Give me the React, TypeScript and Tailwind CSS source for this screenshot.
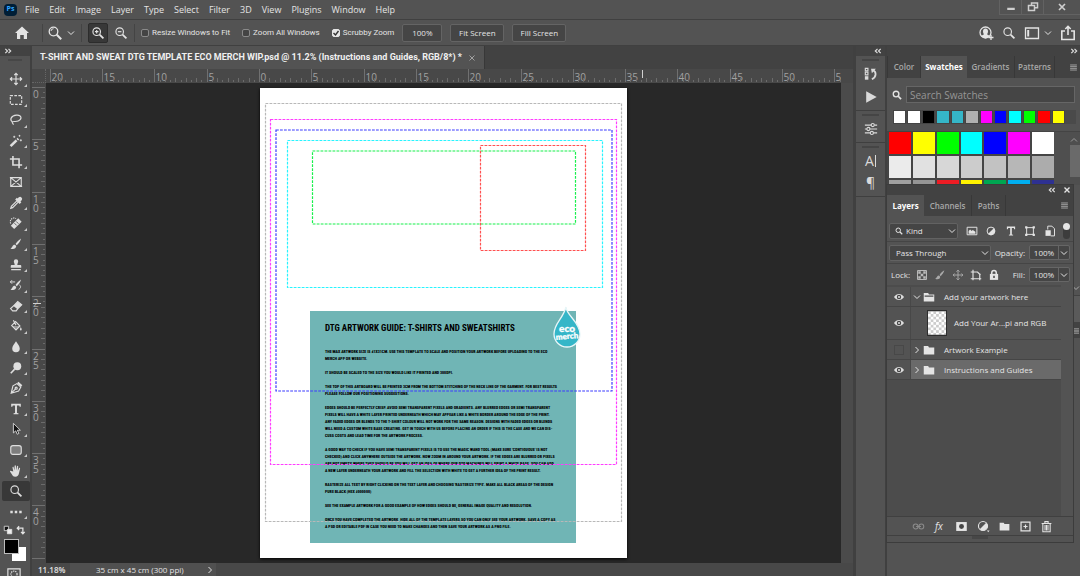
import type { ReactNode } from "react";
import { clsx } from "clsx";

const MENUS = ["File", "Edit", "Image", "Layer", "Type", "Select", "Filter", "3D", "View", "Plugins", "Window", "Help"];

const RECENT = [
  "#ffffff", "#ffffff", "#000000", "#35b6c8", "#35b6c8", "#b0b0b0",
  "#ff00ff", "#0000ff", "#00ffff", "#00ff00", "#ff0000", "#ffff00",
];

const SWATCHES = [
  "#ff0000", "#ffff00", "#00ff00", "#00ffff", "#0000ff", "#ff00ff", "#ffffff",
  "#ebebeb", "#e1e1e1", "#d7d7d7", "#cccccc", "#c2c2c2", "#b7b7b7", "#acacac",
  "#a0a0a0", "#959595", "#ed1c24", "#fff200", "#00a651", "#00aeef", "#2e3192",
];

const GUIDE_TEXT = [
  ["The max artwork size is 41x31cm. Use this template to scale and position your artwork before uploading to the Eco", "Merch app or website."],
  ["It should be scaled to the size you would like it printed and 300dpi."],
  ["The top of this artboard will be printed 3cm from the bottom stitching of the neck line of the garment. For best results", "please follow our positioning suggestions."],
  [
    "Edges should be perfectly crisp. Avoid semi transparent pixels and gradients. Any blurred edges or semi transparent",
    "pixels will have a white layer printed underneath which may appear like a white border around the edge of the print.",
    "Any faded edges or blends to the t-shirt colour will not work for the same reason. Designs with faded edges or blends",
    "will need a custom white base creating. Get in touch with us before placing an order if this is the case and we can dis-",
    "cuss costs and lead time for the artwork process.",
  ],
  [
    "A good way to check if you have semi transparent pixels is to use the magic wand tool (make sure 'contiguous' is not",
    "checked) and click anywhere outside the artwork.  Now zoom in around your artwork. If the edges are blurred or pixels",
    "are not empty where they should be you will get an idea of where our DTG machines will print a white base. You can add",
    "a new layer underneath your artwork and fill the selection with white to get a further idea of the print result.",
  ],
  ["Rasterize all text by right clicking on the text layer and choosing 'Rasterize Type'. Make all black areas of the design", "pure black (Hex #000000)"],
  ["See the example artwork for a good example of how edges should be, general image quality and resolution."],
  ["Once you have completed the artwork, hide all of the template layers so you can only see your artwork. Save a copy as", "a PSD or editable PDF in case you need to make changes and then save your artwork as a PNG file."],
];

const GUIDES = [
  { x: 5.5, y: 15.5, w: 356, h: 418, color: "#b8b8b8" },
  { x: 10.5, y: 31.5, w: 346, h: 345, color: "#ff3cff" },
  { x: 16, y: 42, w: 336, h: 261, color: "#3c3cff" },
  { x: 27.5, y: 52.5, w: 315, h: 147, color: "#28f4ff" },
  { x: 52.5, y: 63, w: 263, h: 73, color: "#18f04c" },
  { x: 220.5, y: 57.5, w: 105, h: 105, color: "#ff5050" },
];

function Icon({ children, className = "size-4" }: { children: ReactNode; className?: string }) {
  return (
    <svg viewBox="0 0 16 16" fill="none" stroke="currentColor" strokeWidth="1.3" className={clsx("shrink-0", className)} aria-hidden="true">
      {children}
    </svg>
  );
}

function Chevron({ className = "w-2 h-2" }: { className?: string }) {
  return (
    <svg viewBox="0 0 8 8" fill="none" stroke="currentColor" className={clsx("shrink-0", className)} aria-hidden="true">
      <path d="M1 2.5l3 3 3-3" />
    </svg>
  );
}

function DoubleChevron({ left = false }: { left?: boolean }) {
  return (
    <svg viewBox="0 0 8 8" fill="none" stroke="#dcdcdc" strokeWidth="1.2" className="size-2" aria-hidden="true">
      {left ? <path d="M3.5 1.8L1.3 4l2.2 2.2M6.7 1.8L4.5 4l2.2 2.2" /> : <path d="M1.3 1.8L3.5 4 1.3 6.2M4.5 1.8L6.7 4 4.5 6.2" />}
    </svg>
  );
}

const lens = (
  <>
    <circle cx="6.5" cy="6.5" r="4.3" />
    <path d="M9.8 9.8l4.4 4.4" strokeWidth="2" />
  </>
);

const folder = <path d="M2 3.5h5l1 1.5h6v8H2z" fill="currentColor" stroke="none" />;

const brush = (
  <>
    <path d="M13.8 1.8c-2.6 1.6-4.8 3.8-6.4 6.2l1.5 1.5c2.3-2 4-4.5 4.9-7.7z" fill="currentColor" stroke="none" />
    <path d="M6.7 8.8c-2.8-.2-2.4 2.9-5 4.2 2.5 1.4 6.4.9 6.6-2.6z" fill="currentColor" stroke="none" />
  </>
);

const halfCircle = (
  <>
    <circle cx="8" cy="8" r="5.2" />
    <path d="M11.7 4.3a5.2 5.2 0 0 1-7.4 7.4z" fill="currentColor" stroke="none" />
  </>
);

const move = (
  <path d="M8 1.5v13M1.5 8h13M6 3.5l2-2 2 2M6 12.5l2 2 2-2M3.5 6l-2 2 2 2M12.5 6l2 2-2 2" />
);

const TOOLS: { name: string; icon: ReactNode; corner?: boolean }[] = [
  { name: "Move", corner: true, icon: move },
  { name: "Marquee", corner: true, icon: <path d="M1.5 3h13v10h-13z" strokeDasharray="3 1.6" /> },
  {
    name: "Lasso", corner: true,
    icon: <path d="M4 10.500C.2 7.500 2.500 3 8.500 2.500s7 4.500 2 6.700C8 10.300 4.500 9 3.800 10.300s1.600 1.800 1 3.200" />,
  },
  {
    name: "Magic Wand", corner: true,
    icon: (
      <>
        <path d="M1.8 13.8l6.800-6.500" strokeWidth="3" />
        <path d="M9.500 6.500l1.200-1.200" strokeWidth="2.600" />
        <path d="M6 2v2.500M4.800 3.200h2.400M12 1v2M11 2h2M13.500 6v2.400M12.300 7.200h2.400" strokeWidth="1" />
      </>
    ),
  },
  { name: "Crop", corner: true, icon: <path d="M4.500 1v10.500H15M1 4.500h10.500V15" strokeWidth="1.800" /> },
  { name: "Frame", icon: <path d="M2 3h12v10H2zM2 3l12 10M14 3L2 13M1 3h2M13 13h2" /> },
  {
    name: "Eyedropper", corner: true,
    icon: (
      <>
        <path d="M9 5.500l-6.300 6.300-.7 2.200 2.200-.7L10.500 7" />
        <path d="M8 4l4.200 4.200 1-1-1-1 1.800-1.800c1.200-1.700-.9-3.700-2.400-2.400L9.800 3.800 9 3z" fill="currentColor" />
      </>
    ),
  },
  {
    name: "Healing Brush", corner: true,
    icon: (
      <>
        <path d="M2 8.500a4.200 4.200 0 0 1 6-5.500" strokeDasharray="1.500 1" />
        <path d="M4 13l8.500-8.500" strokeWidth="5.500" />
        <path d="M6.200 8.200l2.600 2.600M8.200 6.200l2.600 2.600" stroke="#535353" strokeWidth="1" />
      </>
    ),
  },
  { name: "Brush", corner: true, icon: brush },
  {
    name: "Clone Stamp", corner: true,
    icon: <path d="M5.500 4a2.500 2.500 0 0 1 5 0c0 1.500-1 2-1 4H13q1 0 1 1v2H2V9q0-1 1-1h3.500c0-2-1-2.500-1-4zM2.500 12.500h11v1.500h-11z" fill="currentColor" stroke="none" />,
  },
  {
    name: "History Brush", corner: true,
    icon: (
      <>
        {brush}
        <path d="M1.500 4.500h5.500M1.500 4.500l2-2M1.500 4.500l2 2M12 8c2 1 1.500 4-1 5" strokeWidth="1.100" />
      </>
    ),
  },
  {
    name: "Eraser", corner: true,
    icon: (
      <>
        <path d="M5.500 7.500L10 3l4.500 3.500L10 11z" fill="currentColor" />
        <path d="M5.500 7.500L1.800 11l2.400 2.500h4L10 11" />
      </>
    ),
  },
  {
    name: "Paint Bucket", corner: true,
    icon: (
      <>
        <path d="M3 7.500L7.500 3l5 5L8 12.500zM8 7L5 1.500" />
        <path d="M3.500 8h8.800L8 12.300z" fill="currentColor" stroke="none" opacity="0.5" />
        <path d="M13.500 9c1.500 2.500 1.200 4 0 4s-1.500-1.500 0-4z" fill="currentColor" stroke="none" />
      </>
    ),
  },
  { name: "Blur", corner: true, icon: <path d="M8 1.500c2 3.500 4.300 5.500 4.300 8.300a4.300 4.300 0 0 1-8.600 0C3.700 7 6 5 8 1.500z" fill="currentColor" stroke="none" /> },
  {
    name: "Dodge", corner: true,
    icon: (
      <>
        <circle cx="9.500" cy="6" r="4.500" fill="currentColor" stroke="none" />
        <path d="M6.500 9.300L2 14" strokeWidth="1.800" />
      </>
    ),
  },
  {
    name: "Pen", corner: true,
    icon: (
      <>
        <path d="M9 3l4.500 4-2.500 4.500-8.500 2.500 2-8.500zM3 13.500l4.500-4.500" />
        <circle cx="8.200" cy="8.200" r="1.200" />
        <path d="M10 1.800l4.500 4" strokeWidth="2.200" />
      </>
    ),
  },
  { name: "Type", corner: true, icon: <path d="M2.500 2h11v3.500h-1.300L11.700 4H9.100v8.500l1.700.4V14H5.200v-1.100l1.700-.4V4H4.300l-.5 1.500H2.500z" fill="currentColor" stroke="none" /> },
  { name: "Path Selection", corner: true, icon: <path d="M5 1.500v11l2.700-2.400 1.700 3.900 1.900-.9-1.800-3.700H13z" fill="#111" strokeWidth="1" /> },
  { name: "Rectangle", corner: true, icon: <rect x="2" y="3" width="12" height="10" rx="2.500" fill="#7d7d7d" /> },
  {
    name: "Hand", corner: true,
    icon: <path d="M4.900 8.500L4 4.200c-.2-1 1-1.300 1.300-.4l1 3.500.1-5c0-1 1.400-1 1.500 0l.3 4.900.9-4.700c.2-1 1.500-.7 1.400.2l-.4 5 1.300-2.900c.4-.9 1.500-.5 1.300.4l-1.300 5.300c-.5 2.300-1.700 4-4.200 4-2.400 0-3.200-1.200-4.200-3L1.300 8.800c-.5-.9.5-1.500 1.200-.9z" fill="currentColor" stroke="none" />,
  },
  { name: "Zoom", icon: lens },
  {
    name: "Edit Toolbar", corner: true,
    icon: <path d="M1.500 8h2.800M6.600 8h2.800M11.700 8h2.800" strokeWidth="2.800" />,
  },
];

function MenuBar() {
  return (
    <header className="flex h-5 shrink-0 items-center border-b border-[#404040] bg-[#535353]">
      <div className="ml-1 flex h-3 w-[13px] items-center justify-center rounded-sm bg-[#001e36] text-[7px] font-bold text-[#31a8ff]">Ps</div>
      <nav className="ml-2 flex items-center gap-[10px] text-[9px]">
        {MENUS.map((menu) => (
          <button key={menu} type="button">{menu}</button>
        ))}
      </nav>
      <div className="ml-auto flex h-[15px] self-start border-b border-l border-[#626262] text-[#cfcfcf]">
        <button type="button" aria-label="Minimize" className="flex w-[22px] items-center justify-center border-r border-[#626262]">
          <Icon className="size-3"><path d="M3 10.500h10" strokeWidth="3" /></Icon>
        </button>
        <button type="button" aria-label="Restore" className="flex w-[22px] items-center justify-center border-r border-[#626262]">
          <Icon className="size-3"><path d="M6 6V2.500h8V9h-4M2 6h8v6.500H2z" strokeWidth="2" /></Icon>
        </button>
        <button type="button" aria-label="Close" className="flex w-9 items-center justify-center">
          <Icon className="size-3"><path d="M4 4l8 8M12 4l-8 8" strokeWidth="2.200" /></Icon>
        </button>
      </div>
    </header>
  );
}

function Option({ label, checked = false }: { label: string; checked?: boolean }) {
  return (
    <label className="flex items-center gap-[3px]">
      <span className="relative flex size-2">
        <input
          type="checkbox"
          defaultChecked={checked}
          className="peer size-2 appearance-none rounded-[2px] border border-[#8a8a8a] bg-[#444] checked:border-[#e6e6e6] checked:bg-[#e6e6e6]"
        />
        <svg viewBox="0 0 8 8" fill="none" stroke="#333" strokeWidth="1.400" className="pointer-events-none absolute inset-0 hidden size-2 peer-checked:block">
          <path d="M1.500 4l2 2 3-4" />
        </svg>
      </span>
      {label}
    </label>
  );
}

function OptionsBar() {
  return (
    <div className="flex h-[26px] shrink-0 items-center border-b border-[#404040] bg-[#535353] text-[8px]">
      <button type="button" aria-label="Home" className="ml-[14px]">
        <Icon><path d="M8 1.500l7 6.500h-2v6H9.800v-4H6.200v4H3V8H1z" fill="currentColor" stroke="none" /></Icon>
      </button>
      <div className="mr-1 ml-3 h-[18px] w-px bg-[#444]" />
      <Icon>{lens}<path d="M4 6a2.500 2.500 0 0 1 2.500-2.300" strokeWidth="1" /></Icon>
      <Chevron className="ml-1 size-2" />
      <div className="mx-[6px] h-[18px] w-px bg-[#444]" />
      <button type="button" aria-label="Zoom in" className="flex size-5 items-center justify-center rounded-[2px] border border-[#2c2c2c] bg-[#383838]">
        <Icon className="size-[14px]">{lens}<path d="M4.500 6.500h4M6.500 4.500v4" /></Icon>
      </button>
      <button type="button" aria-label="Zoom out" className="ml-[6px]">
        <Icon className="size-[14px]">{lens}<path d="M4.500 6.500h4" /></Icon>
      </button>
      <div className="mx-[6px] h-[18px] w-px bg-[#444]" />
      <div className="flex items-center gap-3 font-['Roboto',sans-serif]">
        <Option label="Resize Windows to Fit" />
        <Option label="Zoom All Windows" />
        <Option label="Scrubby Zoom" checked />
      </div>
      <div className="ml-2 flex gap-2">
        <button type="button" className="h-[18px] w-10 rounded-[2px] border border-[#646464] bg-[#454545]">100%</button>
        <button type="button" className="h-[18px] w-[54px] rounded-[2px] border border-[#646464] bg-[#454545]">Fit Screen</button>
        <button type="button" className="h-[18px] w-[54px] rounded-[2px] border border-[#646464] bg-[#454545]">Fill Screen</button>
      </div>
      <div className="mr-1 ml-auto flex items-center gap-2">
        <Icon>
          <circle cx="7.500" cy="7.500" r="5.500" />
          <path d="M5 6.500a2.500 3 0 0 1 5 0c0 1.500-.8 2-.8 3 1 .6 2 .8 2.800 1.500a5.500 5.500 0 0 1-9 0c.8-.7 1.800-.9 2.800-1.500 0-1-.8-1.500-.8-3z" fill="currentColor" stroke="none" />
          <path d="M13 10v5M10.500 12.500h5" />
        </Icon>
        <Icon className="size-[14px]">{lens}</Icon>
        <Icon><path d="M1.500 3h13v10.500h-13z" /><path d="M3.200 5h2v6.500h-2z" fill="currentColor" stroke="none" /></Icon>
        <Chevron className="-ml-1 size-2" />
        <Icon><path d="M5 6H1.800v8.500h12.400V6H11M8 10V1.500M5.300 4L8 1.300 10.700 4" strokeWidth="1.600" /></Icon>
      </div>
    </div>
  );
}

function Toolbar() {
  return (
    <aside className="flex w-8 shrink-0 flex-col border-r-2 border-[#404040] bg-[#535353]">
      <div className="flex h-[10px] items-center bg-[#424242] pl-1"><DoubleChevron /></div>
      <div className="mx-2 mt-[3px] mb-2 h-[2px] bg-[#474747]" />
      <div className="flex h-[453px] flex-col pl-[2px]">
        {TOOLS.map((tool) => (
          <button
            key={tool.name}
            type="button"
            aria-label={tool.name}
            className={clsx(
              "relative flex w-7 flex-1 items-center justify-center rounded-[2px] text-[#dedede]",
              tool.name === "Zoom" && "bg-[#383838]",
            )}
          >
            <Icon className="size-[14px]">{tool.icon}</Icon>
            {tool.corner && (
              <svg viewBox="0 0 3 3" className="absolute right-[3px] bottom-[3px] size-[3px] fill-[#c8c8c8]">
                <path d="M3 0v3H0z" />
              </svg>
            )}
          </button>
        ))}
      </div>
      <div className="flex h-4 items-center justify-between pr-1 pl-[3px]">
        <Icon className="size-[10px]"><path d="M2 2h7v7H2z" fill="#111" /><path d="M7 7h7v7H7z" fill="#eee" /></Icon>
        <Icon className="size-[10px]"><path d="M5 2L2 5l3 3M2 5h9v9M8 11l3 3 3-3" strokeWidth="2" /></Icon>
      </div>
      <div className="relative ml-1 h-6 shrink-0">
        <div className="absolute top-[9px] left-2 size-[14px] bg-white" />
        <div className="absolute top-[1px] left-0 size-[15px] border border-[#bdbdbd] bg-black" />
      </div>
      <div className="mt-[6px] ml-[7px] h-2 w-[14px] overflow-hidden">
        <Icon className="size-[14px]"><path d="M1 1h14v12H1z" /><circle cx="8" cy="7" r="3.500" strokeDasharray="1.500 1" /></Icon>
      </div>
    </aside>
  );
}

const UNIT = 10.46;

function HorizontalRuler() {
  const ticks = Array.from({ length: 156 }, (_, i) => i - 42);
  return (
    <div className="flex h-[14px] shrink-0 overflow-hidden bg-[#484848]">
      <div className="w-[14px] border-r border-b border-dotted border-[#666]" />
      <svg className="h-[14px] w-0 flex-1" aria-hidden="true">
        {ticks.map((t) => {
          const x = Math.round(214 + (t * UNIT) / 2) - 0.5;
          const major = t % 10 === 0;
          return (
            <g key={t}>
              <path d={`M${x} ${major ? 0 : t % 2 === 0 ? 9 : 11}V13`} stroke={major ? "#707070" : "#6b6b6b"} />
              {major && <text x={x + 1} y="12" fontSize="10" fill="#a2a2a2">{Math.abs(t / 2)}</text>}
            </g>
          );
        })}
        <path d="M596.500 1v8" stroke="#d0d0d0" />
      </svg>
      <div className="w-3" />
    </div>
  );
}

function VerticalRuler() {
  const ticks = Array.from({ length: 92 }, (_, i) => i);
  return (
    <svg className="h-full w-[14px] shrink-0 bg-[#484848]" aria-hidden="true">
      {ticks.map((t) => {
        const y = Math.round(5 + (t * UNIT) / 2) - 0.5;
        const major = t % 10 === 0;
        return (
          <g key={t}>
            <path d={`M${major ? 0 : t % 2 === 0 ? 9 : 11} ${y}H13`} stroke={major ? "#707070" : "#6b6b6b"} />
            {major && t < 90 && (
              <text y={y + 10} fontSize="10" fill="#a2a2a2">
                {String(t / 2).split("").map((digit, i) => (
                  <tspan key={i} x="1" dy={i * 9}>{digit}</tspan>
                ))}
              </text>
            )}
          </g>
        );
      })}
      <path d="M1 220.500h8" stroke="#d0d0d0" />
    </svg>
  );
}

function Artboard() {
  return (
    <div className="relative h-[470px] w-[367px] shrink-0 bg-white shadow-[0_1px_3px_#000]">
      <article className="absolute top-[223px] left-[50px] h-[232px] w-[266px] bg-[#70b5b5] pt-[11px] pl-[15px] font-['Roboto_Condensed','Roboto',sans-serif] font-bold whitespace-nowrap text-black uppercase">
        <h1 className="text-[9px] leading-3">DTG Artwork Guide: T-shirts and Sweatshirts</h1>
        <div className="mt-[14px] flex flex-col gap-[7px] text-[4px] leading-[7px] font-black">
          {GUIDE_TEXT.map((lines) => (
            <p key={lines[0]}>
              {lines.map((line) => (
                <span key={line} className="block">{line}</span>
              ))}
            </p>
          ))}
        </div>
      </article>
      <svg viewBox="0 0 367 470" className="absolute inset-0 size-full" fill="none" aria-hidden="true">
        {GUIDES.map((g) => (
          <rect key={g.color} x={g.x} y={g.y} width={g.w} height={g.h} stroke={g.color} strokeWidth="1.200" strokeDasharray="2.800 1.200" />
        ))}
      </svg>
      <svg viewBox="0 0 28 42" className="absolute top-[218px] left-[293px] h-[42px] w-7">
        <path d="M13 1c0 8 14 15 14 27a13 13 0 0 1-26 0C1 17 10 13 13 1z" fill="#35b6c8" stroke="#e8f6f8" strokeWidth="1.300" />
        <g fill="#fff" stroke="#fff" strokeWidth="0.300" fontWeight="900" textAnchor="middle" fontFamily="Lato, sans-serif">
          <text x="14" y="26" fontSize="10">eco</text>
          <text x="14" y="33" fontSize="8" transform="rotate(-5 14 30)">merch</text>
        </g>
      </svg>
    </div>
  );
}

function Document() {
  return (
    <main className="flex min-w-0 flex-1 flex-col bg-[#424242]">
      <div className="flex h-[23px] shrink-0">
        <div className="flex items-center gap-[6px] border-r border-[#383838] bg-[#535353] px-2 font-['Roboto',sans-serif] text-[9px] font-bold whitespace-nowrap text-[#f0f0f0]">
          T-SHIRT AND SWEAT DTG TEMPLATE ECO MERCH WIP.psd @ 11.2% (Instructions and Guides, RGB/8*) *
          <button type="button" aria-label="Close tab" className="text-[#b5b5b5]">
            <Icon className="size-2"><path d="M3 3l10 10M13 3L3 13" strokeWidth="1.600" /></Icon>
          </button>
        </div>
      </div>
      <HorizontalRuler />
      <div className="flex min-h-0 flex-1">
        <VerticalRuler />
        <div className="flex min-w-0 flex-1 items-center justify-center overflow-hidden bg-[#282828]">
          <Artboard />
        </div>
        <div className="w-3 bg-[#4b4b4b]" />
      </div>
      <footer className="flex h-[13px] shrink-0 items-center bg-[#484848] text-[8px]">
        <span className="w-[38px] pl-[6px] font-semibold">11.18%</span>
        <div className="flex h-full w-[146px] items-center justify-between bg-[#505050] pr-[2px] pl-[26px]">
          35 cm x 45 cm (300 ppi)
          <Chevron className="size-2 -rotate-90" />
        </div>
      </footer>
    </main>
  );
}

function Grip() {
  return <div className="mx-[6px] mt-[3px] h-[2px] bg-[#454545]" />;
}

function Dock() {
  return (
    <aside className="flex w-[34px] shrink-0 flex-col border-r-2 border-l-[3px] border-[#404040] bg-[#535353] text-[#dadada]">
      <div className="flex h-[10px] items-center justify-end bg-[#424242] pr-[3px]"><DoubleChevron left /></div>
      <div className="flex h-[55px] flex-col items-center border-b border-[#3f3f3f]">
        <div className="w-full"><Grip /></div>
        <Icon className="mt-[6px] size-[14px]">
          <path d="M1.500 1.500h3v3h-3zM1.500 6h3v3h-3z" />
          <path d="M1 10.500h4v4H1z" fill="currentColor" stroke="none" />
          <path d="M10 3.500c4.500 2 4.500 7.500-1 10.500" strokeWidth="2" />
          <path d="M8 2h5.500L9 7z" fill="currentColor" stroke="none" />
        </Icon>
        <Icon className="mt-[9px] size-[14px]"><path d="M2.500 1.500l12 6.500-12 6.500z" fill="currentColor" stroke="none" /></Icon>
      </div>
      <div className="flex h-8 flex-col items-center border-b border-[#3f3f3f]">
        <div className="w-full"><Grip /></div>
        <Icon className="mt-[6px] size-[14px]">
          <path d="M1 3.500h7M12 3.500h3M1 8h2M7 8h8M1 12.500h6M11 12.500h4" />
          <circle cx="10" cy="3.500" r="1.800" />
          <circle cx="5" cy="8" r="1.800" />
          <circle cx="9" cy="12.500" r="1.800" />
        </Icon>
      </div>
      <div className="flex h-[54px] flex-col items-center border-b border-[#3f3f3f]">
        <div className="w-full"><Grip /></div>
        <div className="mt-[5px] flex items-center gap-px text-[14px] leading-4">A<div className="h-3 w-px bg-[#dadada]" /></div>
        <div className="mt-[6px] text-[14px] leading-4">¶</div>
      </div>
    </aside>
  );
}

const panelMenu = <path d="M2 3.500h12M2 6.500h12M2 9.500h12M2 12.500h12" strokeWidth="1.600" />;

function SwatchesPanel() {
  return (
    <section className="flex w-[193px] shrink-0 flex-col bg-[#535353]">
      <div className="flex h-[10px] items-center justify-end bg-[#424242] pr-[2px]"><DoubleChevron /></div>
      <div className="flex h-[22px] items-stretch border-l border-[#383838] bg-[#424242] text-[8px] font-semibold text-[#a8a8a8]">
        <button type="button" className="w-[33px] border-r border-[#383838]">Color</button>
        <button type="button" className="w-[46px] bg-[#535353] font-bold text-white">Swatches</button>
        <button type="button" className="w-12 border-r border-[#383838]">Gradients</button>
        <button type="button" className="w-10 border-r border-[#383838]">Patterns</button>
        <button type="button" aria-label="Panel menu" className="ml-auto pr-[2px]"><Icon className="size-[9px]">{panelMenu}</Icon></button>
      </div>
      <div className="mt-2 flex h-[17px] items-center gap-1 px-[5px]">
        <Icon className="size-[10px]"><circle cx="6.500" cy="6.500" r="4.500" strokeWidth="2.200" /><path d="M10 10l4.500 4.500" strokeWidth="2.800" /></Icon>
        <input
          type="text"
          aria-label="Search Swatches"
          placeholder="Search Swatches"
          className="h-full min-w-0 flex-1 border border-[#666] bg-[#454545] px-[3px] text-[10px] placeholder:text-[#969696]"
        />
      </div>
      <div className="mt-[7px] mr-1 ml-[6px] bg-[#4a4a4a]">
        <div className="flex h-[14px] w-[172px] gap-px">
          {RECENT.map((color, i) => (
            <button key={i} type="button" aria-label={color} className="h-full flex-1 border border-[#444]" style={{ background: color }} />
          ))}
        </div>
      </div>
      <div className="mt-[7px] flex h-[54px] border-t border-[#444] bg-[#454545]">
        <div className="grid flex-1 auto-rows-[22px] grid-cols-7 gap-[2px] overflow-hidden pl-[2px]">
          {SWATCHES.map((color) => (
            <button key={color} type="button" aria-label={color} style={{ background: color }} />
          ))}
        </div>
        <div className="w-[26px] bg-[#4f4f4f] pt-1 pl-4 text-[#999]">
          <Chevron className="size-2 rotate-180" />
          <div className="mt-[1px] h-8 bg-[#6a6a6a]" />
        </div>
      </div>
      <div className="mt-24 flex h-[14px] items-center justify-end text-[#aaa]"><Chevron className="size-2" /></div>
      <div className="h-7 border-y border-[#424242] bg-[#5a5a5a]" />
      <div className="flex h-[15px] items-center justify-end bg-[#424242] text-[#aaa]"><Icon className="size-2">{panelMenu}</Icon></div>
    </section>
  );
}

function Percent({ id, label }: { id: string; label: string }) {
  return (
    <div className="ml-auto flex items-center gap-1">
      <label htmlFor={id}>{label}</label>
      <div className="flex h-[15px] items-center rounded-[2px] border border-[#666] bg-[#454545]">
        <input id={id} type="text" defaultValue="100%" className="w-7 text-center" />
        <button type="button" aria-label={`${label} slider`} className="flex h-full w-[11px] items-center justify-center border-l border-[#666]"><Chevron /></button>
      </div>
    </div>
  );
}

function Eye() {
  return (
    <svg viewBox="0 0 12 8" className="h-2 w-3" aria-hidden="true">
      <path d="M1 4c2.500-4 7.500-4 10 0-2.500 4-7.500 4-10 0z" fill="#dedede" />
      <circle cx="6" cy="4" r="2.200" fill="#444" />
      <circle cx="6" cy="4" r="1" fill="#dedede" />
    </svg>
  );
}

const LAYERS = [
  { name: "Add your artwork here", kind: "open", visible: true },
  { name: "Add Your Ar...pi and RGB", kind: "image", visible: true },
  { name: "Artwork Example", kind: "group", visible: false },
  { name: "Instructions and Guides", kind: "group", visible: true, selected: true },
];

function LayersPanel() {
  return (
    <section className="absolute top-[138px] right-[6px] flex h-[359px] w-[188px] flex-col border border-[#3c3c3c] bg-[#535353] text-[8px]">
      <div className="flex h-[10px] shrink-0 items-center justify-end gap-[7px] bg-[#424242] pr-[2px]">
        <DoubleChevron left />
        <Icon className="size-2"><path d="M3 3l10 10M13 3L3 13" strokeWidth="2.800" /></Icon>
      </div>
      <div className="flex h-[21px] shrink-0 bg-[#424242] font-semibold text-[#a8a8a8]">
        <button type="button" className="w-[37px] bg-[#535353] font-bold text-white">Layers</button>
        <button type="button" className="w-12 border-r border-[#383838]">Channels</button>
        <button type="button" className="w-[34px] border-r border-[#383838]">Paths</button>
        <button type="button" aria-label="Panel menu" className="ml-auto pr-1"><Icon className="size-[9px]">{panelMenu}</Icon></button>
      </div>
      <div className="flex h-[26px] shrink-0 items-center justify-between border-b border-[#454545] pt-1 pr-[3px] pl-[2px]">
        <div className="relative flex items-center">
          <Icon className="pointer-events-none absolute left-[6px] size-2"><circle cx="6.500" cy="6.500" r="4.500" strokeWidth="2" /><path d="M10 10l4.500 4.500" strokeWidth="2.500" /></Icon>
          <select aria-label="Filter kind" className="h-4 w-[69px] appearance-none rounded-[2px] border border-[#626262] bg-[#454545] pl-4">
            <option>Kind</option>
          </select>
          <Chevron className="pointer-events-none absolute right-[2px] size-2" />
        </div>
        <Icon className="size-3"><path d="M1.500 3h13v10h-13z" /><path d="M3.500 11.500V8l2-2 2 2 1.500-1.500 3.500 2.500v2.500z" fill="currentColor" stroke="none" /></Icon>
        <Icon className="size-3">{halfCircle}</Icon>
        <Icon className="size-3">{TOOLS[16].icon}</Icon>
        <Icon className="size-3"><path d="M3.500 3.500h9v9h-9z" /><path d="M1.500 1.500h3v3h-3zM11.500 1.500h3v3h-3zM1.500 11.500h3v3h-3zM11.500 11.500h3v3h-3z" fill="currentColor" stroke="none" /></Icon>
        <Icon className="size-3"><path d="M5 6V1.500h5.500L14 5v9.500H9" /><path d="M2 7h7v7.500H2z" fill="currentColor" stroke="none" /></Icon>
        <button type="button" aria-label="Toggle filter" className="flex h-4 w-[7px] items-start rounded-full bg-[#3c3c3c]">
          <span className="size-[7px] rounded-full bg-[#e6e6e6]" />
        </button>
      </div>
      <div className="flex h-[22px] shrink-0 items-center border-b border-[#454545] pr-[3px] pl-[2px]">
        <div className="relative flex items-center">
          <select aria-label="Blend mode" className="h-4 w-[102px] appearance-none rounded-[2px] border border-[#626262] bg-[#454545] pl-[6px]">
            <option>Pass Through</option>
          </select>
          <Chevron className="pointer-events-none absolute right-[2px] size-2" />
        </div>
        <Percent id="opacity" label="Opacity:" />
      </div>
      <div className="flex h-[21px] shrink-0 items-center pr-[3px] pl-1">
        <span>Lock:</span>
        <div className="ml-[6px] flex gap-[6px]">
          <Icon className="size-3 text-[#bbb]"><path d="M2 2h12v12H2z" /><path d="M3 3h3.300v3.300H3zM9.700 3H13v3.300H9.700zM6.300 6.300h3.400v3.400H6.300zM3 9.700h3.300V13H3zM9.700 9.700H13V13H9.700z" fill="currentColor" stroke="none" /></Icon>
          <Icon className="size-3 text-[#aaa]">{brush}</Icon>
          <Icon className="size-3 text-[#aaa]">{move}</Icon>
          <Icon className="size-3"><path d="M4 1v14M1 4h9l4 4M1 13h14M13 6v9" strokeWidth="1.500" /></Icon>
          <Icon className="size-3"><path d="M5 7V5a3 3 0 0 1 6 0v2" strokeWidth="2" /><path d="M2.500 6.500h11v8h-11z" fill="currentColor" stroke="none" /><path d="M8 9v3" stroke="#444" strokeWidth="2" /></Icon>
        </div>
        <Percent id="fill" label="Fill:" />
      </div>
      <ul className="mr-3 flex-1 bg-[#4c4c4c] pt-[2px]">
        {LAYERS.map((layer) => (
          <li key={layer.name} className={clsx("flex border-b border-[#454545] bg-[#535353]", layer.kind === "image" ? "h-[33px]" : "h-5")}>
            <button type="button" aria-label={`Toggle ${layer.name}`} className="flex w-6 items-center justify-center border-r border-[#484848]">
              {layer.visible ? <Eye /> : <span className="size-[10px] border border-[#484848]" />}
            </button>
            <div className={clsx("flex flex-1 items-center", layer.selected && "bg-[#6a6a6a]")}>
              {layer.kind === "image" ? (
                <svg viewBox="0 0 20 26" className="mr-[7px] ml-4 h-[26px] w-5 border border-[#2e2e2e]">
                  <defs>
                    <pattern id="checker" width="6" height="6" patternUnits="userSpaceOnUse">
                      <path d="M0 0h6v6H0z" fill="#fff" />
                      <path d="M0 0h3v3H0zM3 3h3v3H3z" fill="#ccc" />
                    </pattern>
                  </defs>
                  <path d="M0 0h20v26H0z" fill="url(#checker)" />
                </svg>
              ) : (
                <>
                  <Chevron className={clsx("ml-[2px] size-2", layer.kind === "group" && "-rotate-90")} />
                  <Icon className="mr-2 ml-[1px] size-[14px]">
                    {folder}
                    {layer.kind === "open" && <path d="M3 7h10" stroke="#535353" strokeWidth="1.500" />}
                  </Icon>
                </>
              )}
              <span>{layer.name}</span>
            </div>
          </li>
        ))}
      </ul>
      <div className="flex h-5 shrink-0 items-center gap-2 border-y border-[#404040] pl-[25px]">
        <Icon className="size-[13px] text-[#8a8a8a]"><circle cx="4.500" cy="8" r="3" /><circle cx="11.500" cy="8" r="3" /><path d="M5 8h6" /></Icon>
        <span className="w-[14px] pl-[2px] text-[10px] leading-3 italic">fx</span>
        <Icon className="size-[13px]"><path d="M1.500 2.500h13v11h-13z" fill="currentColor" stroke="none" /><circle cx="8" cy="8" r="3" fill="#444" stroke="none" /></Icon>
        <Icon className="size-[14px]">{halfCircle}<path d="M12.500 13h3L14 15z" fill="currentColor" stroke="none" /></Icon>
        <Icon className="size-[13px]">{folder}</Icon>
        <Icon className="size-[13px]"><path d="M2.500 2.500h11v11h-11zM8 5.500v5M5.500 8h5" strokeWidth="1.500" /></Icon>
        <Icon className="size-[13px]"><path d="M3.500 5v9.500h9V5M2 4.300h12M6 4V2h4v2M6.200 6v7M8 6v7M9.800 6v7" /></Icon>
      </div>
      <div className="flex h-[6px] shrink-0 justify-center"><div className="h-[3px] w-4 bg-[#474747]" /></div>
    </section>
  );
}

export default function App() {
  return (
    <div className="flex h-screen flex-col overflow-hidden bg-[#535353] font-['Open_Sans','Noto_Sans',sans-serif] text-[#e4e4e4]">
      <MenuBar />
      <OptionsBar />
      <div className="relative flex min-h-0 flex-1">
        <Toolbar />
        <Document />
        <Dock />
        <SwatchesPanel />
        <LayersPanel />
      </div>
    </div>
  );
}
